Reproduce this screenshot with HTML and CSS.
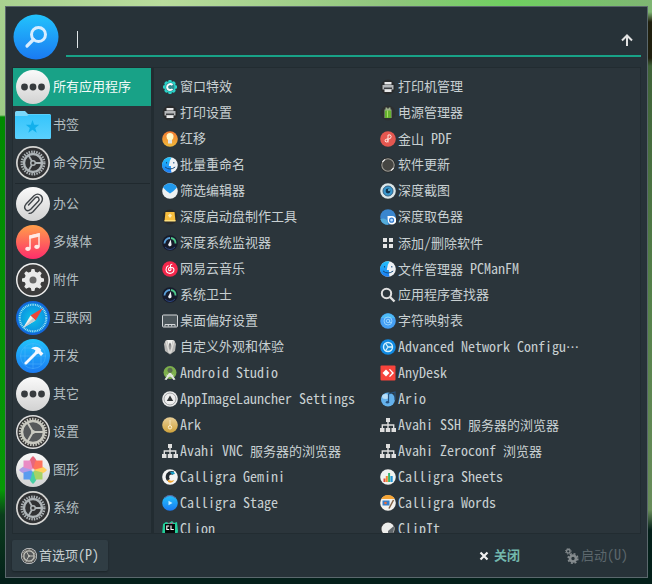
FILE: index.html
```html
<!DOCTYPE html>
<html lang="zh-CN">
<head>
<meta charset="utf-8">
<title>应用程序查找器</title>
<link rel="stylesheet" href="styles.css">
</head>
<body>
<svg class="defs" aria-hidden="true">
  <defs>
    <linearGradient id="g-blue" x2="0" y2="1"><stop stop-color="#22c3fc"/><stop offset="1" stop-color="#1a7af2"/></linearGradient>
    <linearGradient id="g-white" x2="0" y2="1"><stop stop-color="#fafafa"/><stop offset="1" stop-color="#d2d2d2"/></linearGradient>
    <linearGradient id="g-music" x2="0" y2="1"><stop stop-color="#ff9f4a"/><stop offset="1" stop-color="#fe2d6b"/></linearGradient>
    <linearGradient id="g-folder" x2="0" y2="1"><stop stop-color="#35c5fb"/><stop offset="1" stop-color="#5ad0fd"/></linearGradient>
    <linearGradient id="g-orange" x2="0" y2="1"><stop stop-color="#f57a2f"/><stop offset="1" stop-color="#efb93c"/></linearGradient>
    <linearGradient id="g-gold" x2="0" y2="1"><stop stop-color="#e9cf98"/><stop offset="1" stop-color="#d0a33c"/></linearGradient>
    <radialGradient id="g-compass"><stop stop-color="#0fc3e8"/><stop offset="1" stop-color="#0b8fe0"/></radialGradient>
  </defs>
  <symbol id="dots" viewBox="0 0 34 34"><circle cx="17" cy="17" r="17" fill="url(#g-white)"/><g fill="#373b3e"><circle cx="8.500" cy="17" r="3.400"/><circle cx="17" cy="17" r="3.400"/><circle cx="25.500" cy="17" r="3.400"/></g></symbol>
  <symbol id="folder" viewBox="0 0 36 30"><path d="M0 4V2.500Q0 1 1.500 1H10L13 4H34.500Q36 4 36 5.500V12H0z" fill="#7ad8fa"/><path d="M0 6H12L14 4.500H34.500Q36 4.500 36 6V27.500Q36 29 34.500 29H1.500Q0 29 0 27.500z" fill="url(#g-folder)"/><path d="M17.500 10l1.700 4.700 5 .1-4 3.100 1.500 4.800-4.200-2.900-4.200 2.900 1.500-4.800-4-3.100 5-.1z" fill="#12b0ec"/></symbol>
  <symbol id="gearwheel" viewBox="0 0 34 34"><circle cx="17" cy="17" r="17" fill="#d5d5d3"/><circle cx="17" cy="17" r="15.300" fill="#303133"/><circle cx="17" cy="17" r="11.300" fill="none" stroke="#aeb4b7" stroke-width="2.400" stroke-dasharray="1.500 1.050"/><circle cx="17" cy="17" r="9" fill="none" stroke="#aeb4b7" stroke-width="2.400"/><path d="M17 17H26M17 17L12.500 9.200M17 17L12.500 24.800" stroke="#aeb4b7" stroke-width="1.800"/><circle cx="17" cy="17" r="3" fill="#aeb4b7"/><circle cx="17" cy="17" r="1.500" fill="#333"/></symbol>
  <symbol id="settings" viewBox="0 0 34 34"><circle cx="17" cy="17" r="17" fill="#dedede"/><circle cx="17" cy="17" r="15.500" fill="#343434"/><circle cx="17" cy="17" r="13" fill="none" stroke="#c9c9c0" stroke-width="2.400" stroke-dasharray="1.500 1.223"/><circle cx="17" cy="17" r="11" fill="#55585a" stroke="#c9c9c0" stroke-width="2.500"/><path d="M17 17H28M17 17L11.500 7.500M17 17L11.500 26.500" stroke="#c9c9c0" stroke-width="2"/><circle cx="17" cy="17" r="2" fill="#c9c9c0"/></symbol>
  <symbol id="clip" viewBox="0 0 34 34"><circle cx="17" cy="17" r="17" fill="url(#g-white)"/><path d="M12.500 18.500L19 11.500q2-1.700 3.600-.2 1.200 1.700-.3 3.400L15 22.600q-2.800 2.800-5.300.6-2.300-2.500.3-5.600L18 9.200q3.700-3 6.900-.2 3 3.200.2 7.100L17 25.200q-1.800 1.700-3.900 1.700" transform="translate(0 -.500)" fill="none" stroke="#3e4348" stroke-width="1.400" stroke-linecap="round" stroke-linejoin="round"/></symbol>
  <symbol id="music" viewBox="0 0 34 34"><circle cx="17" cy="17" r="17" fill="url(#g-music)"/><path d="M14 23.500V11L23 9V21.500" fill="none" stroke="#ffe8e4" stroke-width="1.500"/><path d="M13.300 10.500L23.700 8V11.500L13.300 14z" fill="#ffe8e4"/><ellipse cx="12" cy="23.800" rx="2.700" ry="2.100" fill="#ffe8e4"/><ellipse cx="21" cy="21.800" rx="2.700" ry="2.100" fill="#ffe8e4"/></symbol>
  <symbol id="cog" viewBox="0 0 34 34"><circle cx="17" cy="17" r="17" fill="#f0f0f0"/><circle cx="17" cy="17" r="15.500" fill="#3c3c3c"/><g fill="#e9e9e9"><circle cx="17" cy="17" r="8.500"/><path id="tooth" d="M14.800 9L15.600 6h2.800L19.200 9V25L18.400 28H15.600L14.800 25z"/><use href="#tooth" transform="rotate(45 17 17)"/><use href="#tooth" transform="rotate(90 17 17)"/><use href="#tooth" transform="rotate(135 17 17)"/></g><circle cx="17" cy="17" r="3.500" fill="#686868"/></symbol>
  <symbol id="compass" viewBox="0 0 34 34"><circle cx="17" cy="17" r="17" fill="#1467d8"/><circle cx="17" cy="17" r="15" fill="url(#g-compass)"/><circle cx="17" cy="17" r="13.300" fill="none" stroke="#b9e8f5" stroke-width="2" stroke-dasharray=".800 .941"/><path d="M27 7L14.500 14.500L19.500 19.500z" fill="#ee4438"/><path d="M7 27L14.500 14.500L19.500 19.500z" fill="#f4f1ed"/><path d="M7 27L17 17L19.500 19.500z" fill="#c4ccd0"/></symbol>
  <symbol id="hammer" viewBox="0 0 34 34"><circle cx="17" cy="17" r="17" fill="url(#g-blue)"/><g stroke="#5bbcff" stroke-width=".600" fill="none" opacity=".7"><circle cx="17" cy="17" r="12.500"/><path d="M4 17H30M17 4V30M8 9H26M8 25H26M9 8V26M25 8V26"/></g><path d="M8.500 23.500L18.500 13.500L20.500 15.500L10.500 25.500Q8 25.500 8.500 23.500zM15 9.500Q19 6.500 23.500 9L25 10.500 24.700 12 27.500 14.500 25 17 22.500 14.500 20.500 15.500 18.500 13.500 19.500 11.500Q18 9.800 15 9.500z" fill="#f5f8ff"/></symbol>
  <symbol id="flower" viewBox="0 0 34 34"><circle cx="17" cy="17" r="17" fill="url(#g-white)"/><path d="M17 17L13.200 10Q13 6.500 17 3Q21 6.500 20.800 10z" fill="#e8667c"/><path d="M17 17L13.200 24Q13 27.500 17 31Q21 27.500 20.800 24z" fill="#48cfa4"/><path d="M17 17L10 13.200Q6.500 13 3 17Q6.500 21 10 20.800z" fill="#b09be8"/><path d="M17 17L24 13.200Q27.500 13 31 17Q27.500 21 24 20.800z" fill="#ffcf5e"/><path d="M17 17L7.500 14.500V7.500H14.500z" fill="#ea8bc4"/><path d="M17 17L19.500 7.500H26.500V14.500z" fill="#ff735c"/><path d="M17 17L26.500 19.500V26.500H19.500z" fill="#a6d366"/><path d="M17 17L14.500 26.500H7.500V19.500z" fill="#5b9cef"/><circle cx="17" cy="17" r="1.500" fill="#eadfe2"/></symbol>

  <symbol id="effects" viewBox="0 0 16 16"><g fill="#2bd4ca"><circle cx="8" cy="8" r="6"/><path d="M6.500 1h3v14h-3zM1 6.500v3h14v-3zM2.100 4.200l2.100-2.100 9.700 9.700-2.100 2.100zM11.800 2.100l2.100 2.100-9.700 9.700-2.100-2.100z"/></g><circle cx="8" cy="8" r="4.500" fill="#318b91"/><path d="M10.500 6Q9 4.500 7 5.300 5 6.200 5.100 8.200 5.400 11 8 11q1.700 0 2.500-1" fill="none" stroke="#fff" stroke-width="1.900"/></symbol>
  <symbol id="printer" viewBox="0 0 16 16"><circle cx="8" cy="8" r="7.500" fill="#292b2c"/><path d="M4.500 3h7v2.500h-7zM4.500 10h7v3h-7z" fill="#e8e8e8"/><path d="M2.500 6h11v4.500h-11z" fill="#b4b6b7"/><path d="M4 8.500h8v1.500H4z" fill="#3c3e40"/></symbol>
  <symbol id="bulb" viewBox="0 0 16 16"><circle cx="8" cy="8" r="7.800" fill="url(#g-orange)"/><path d="M4.500 5.500a3.500 3.500 0 0 1 7 0q0 2-1.500 3.500H6Q4.500 7.500 4.500 5.500" fill="#fff8c9"/><path d="M6 9h4v3.500H6z" fill="#e2e4e5"/></symbol>
  <symbol id="finder" viewBox="0 0 16 16"><circle cx="8" cy="8" r="7.800" fill="#eef1f4"/><path d="M9.500.4A7.800 7.800 0 1 0 9.500 15.600Q8.800 13 8.900 9H6.800Q7 4 9.500.4" fill="url(#g-blue)"/><path d="M4.500 5v1.500M11.800 5v1.500M3 10q5 4 10.200 0" fill="none" stroke="#164b7e"/></symbol>
  <symbol id="filter" viewBox="0 0 16 16"><circle cx="8" cy="8" r="7.800" fill="#eef1f2"/><path d="M1 4.500Q4 .3 8 .3t7 4.200Q12 8 8 10.500 4 8 1 4.500" fill="#2099ed"/></symbol>
  <symbol id="boot" viewBox="0 0 16 16"><circle cx="8" cy="8" r="7.500" fill="#2a2b2b"/><path d="M3.500 3h9l1 9h-11z" fill="#f7bd3d"/><path d="M2.500 11h11v1.500h-11z" fill="#ffe17d"/><path d="M8 4.500L10 6.500 8 9 6 6.500z" fill="#ffebad"/></symbol>
  <symbol id="gauge" viewBox="0 0 16 16"><circle cx="8" cy="8" r="7.800" fill="#161b2b"/><path d="M2.500 8.500A5.500 5.500 0 0 1 8 3" fill="none" stroke="#5aa0d8" stroke-width="1.800"/><path d="M9 3a5.500 5.500 0 0 1 4.500 5.500" fill="none" stroke="#50c98d" stroke-width="1.800"/><path d="M3 12q5 5 10 0" fill="none" stroke="#2d4786"/><path d="M8.700 4.500L9.500 9a1.700 1.700 0 1 1-2.600-.8z" fill="#eef2f7"/></symbol>
  <symbol id="netease" viewBox="0 0 16 16"><circle cx="8" cy="8" r="7.800" fill="#f5274b"/><path d="M10.300 3.200Q8 3.200 8.500 5.500L9 8.500q-.7 1.700-2.200.8Q5.800 7 8.300 6.300q3.500-.2 3.700 2.500-.3 3.500-4 3.600-3.800-.3-4-3.900.2-2.900 2.500-4" fill="none" stroke="#fff" stroke-width="1.100"/></symbol>
  <symbol id="desktop" viewBox="0 0 16 16"><rect x=".5" y="2" width="15" height="12" rx="1" fill="#4c565b" stroke="#d5d8da"/><path d="M3 13.500v-2h10v2M6.300 11.500v2M9.700 11.500v2" fill="none" stroke="#d5d8da"/></symbol>
  <symbol id="suit" viewBox="0 0 16 16"><path d="M4 1h8l2 4-1 7-5 3.500L3 12 2 5z" fill="#b8b7b5"/><path d="M5 1h6L8 11z" fill="#f0f0ed"/><path d="M8 3.500l1 1.500-.5 5L8 11l-.5-1L7 5z" fill="#777"/><path d="M4 2l3.500 12M12 2L8.500 14" stroke="#deddd9" stroke-width="1.400"/></symbol>
  <symbol id="android" viewBox="0 0 16 16"><circle cx="8" cy="7.500" r="6.500" fill="#7daf4c"/><circle cx="8" cy="5.200" r="2.500" fill="#5b6d50"/><path d="M7 8h2l4.500 6.500-2 .5L8 10.500 4.500 15l-2-.5z" fill="#e2e6e0"/><path d="M4.500 10q3.500 2.800 7 0" fill="none" stroke="#e2e6e0"/></symbol>
  <symbol id="appimage" viewBox="0 0 16 16"><circle cx="8" cy="8" r="7.800" fill="#eee"/><circle cx="8" cy="8" r="6" fill="none" stroke="#8b8e90" stroke-width=".800"/><path d="M8 4.500l3.200 5.500H4.800z" fill="#333739"/></symbol>
  <symbol id="ark" viewBox="0 0 16 16"><circle cx="8" cy="8" r="7.800" fill="url(#g-gold)"/><path d="M8 3.500v6" stroke="#fff4d7" stroke-width="1.400" stroke-dasharray="1 1"/><circle cx="8" cy="10.300" r="1.700" fill="none" stroke="#fff0cb" stroke-width="1"/></symbol>
  <symbol id="network" viewBox="0 0 16 16"><path d="M6 1h4v4H6zM0 11h4.500v4H0zM5.800 11h4.400v4H5.800zM11.500 11H16v4h-4.500z" fill="#dedede"/><path d="M8 5v6M2.300 11V8h11.400v3" fill="none" stroke="#dedede" stroke-width="1.400"/></symbol>
  <symbol id="gemini" viewBox="0 0 16 16"><circle cx="8" cy="8" r="7.800" fill="#f4f4f4"/><path d="M11.500 4Q8 3 6 5.500q-1.500 3 .5 5.500" fill="none" stroke="#222a31" stroke-width="3.400"/><path d="M8 3q4-1.500 5 2l-3 .5z" fill="#169dc8"/><path d="M5.500 10.500q3 2 7 .5-2.500 4-6.300 2z" fill="#eda12d"/></symbol>
  <symbol id="stage" viewBox="0 0 16 16"><circle cx="8" cy="8" r="7.800" fill="url(#g-blue)"/><path d="M2.500 3Q8-2 13.500 3" fill="none" stroke="#64609c"/><path d="M6.500 5.800L10.500 8l-4 2.200z" fill="#c4ecff"/></symbol>
  <symbol id="clion" viewBox="0 0 16 16"><path d="M1 3l3-2 3 1 3-2 2 2 3-1 1 9-1 5H0z" fill="#21ce99"/><path d="M5 1l3 2 3-2-2 4z" fill="#ff318c"/><path d="M3 3h10v12H3z" fill="#08090a"/><path d="M7.200 5H4.800v3.500h2.400M9 4.500v4h2.800M4.800 12.500h4" fill="none" stroke="#fff" stroke-width="1.100"/></symbol>
  <symbol id="battery" viewBox="0 0 16 16"><circle cx="8" cy="8" r="7.500" fill="#2d2f30"/><path d="M5.500 2.500h1.700v1h1.600v-1h1.700v2h1V13h-7V4.500h1z" fill="#9eb18b"/><path d="M5 5.500h6V13H5z" fill="#66b22f"/><path d="M7.500 5.500v7" stroke="#a9dc66"/></symbol>
  <symbol id="pdf" viewBox="0 0 16 16"><circle cx="8" cy="8" r="7.800" fill="#e45750"/><path d="M8 11.500V4q3-1 3.200 1.500Q11 8 8.500 8H7q-2.300.2-2 2 .7 1.800 2.400.7Q8 10 8 8" fill="none" stroke="#ffe6df" stroke-width="1"/></symbol>
  <symbol id="update" viewBox="0 0 16 16"><circle cx="8" cy="8" r="7.500" fill="#262727"/><circle cx="8" cy="8" r="6.200" fill="#454542" stroke="#9b9a94" stroke-width="1.100"/><path d="M2.500 5A6.200 6.200 0 0 1 5 2.500M13.500 11a6.200 6.200 0 0 1-2.500 2.500" fill="none" stroke="#eee" stroke-width="1.300"/></symbol>
  <symbol id="eye" viewBox="0 0 16 16"><circle cx="8" cy="8" r="7.800" fill="#dbe6e8"/><circle cx="8" cy="8" r="5" fill="#3897cc" stroke="#326084"/><circle cx="8" cy="8" r="2.400" fill="#133551"/><circle cx="9" cy="7" r="1" fill="#6cc7eb"/></symbol>
  <symbol id="picker" viewBox="0 0 16 16"><circle cx="8" cy="8" r="7.800" fill="#3a86cf"/><path d="M.4 10Q8 8 8 15.800A7.800 7.800 0 0 1 .4 10" fill="#54acdb"/><path d="M7.500 7H12a4.300 4.300 0 1 1-4.300 4.300z" fill="#fff"/><circle cx="11.600" cy="11.200" r="2" fill="#b7ddff" stroke="#347bcf" stroke-width="1.200"/></symbol>
  <symbol id="tiles" viewBox="0 0 16 16"><path d="M3 3h4v4H3zM9 3h4v4H9zM3 9h4v4H3zM9 9h4v4H9z" fill="#e4e4e4"/></symbol>
  <symbol id="find" viewBox="0 0 16 16"><circle cx="6.500" cy="6.500" r="4.700" fill="none" stroke="#e0e0e0" stroke-width="2"/><path d="M10 10l4.500 4.500" stroke="#e0e0e0" stroke-width="2.400"/></symbol>
  <symbol id="charmap" viewBox="0 0 16 16"><circle cx="8" cy="8" r="7.800" fill="#459ff3"/><path d="M1 5Q8-4 15 5z" fill="#4dbbf4"/><circle cx="8" cy="8" r="4" fill="none" stroke="#a3daff" stroke-width=".800"/><circle cx="8" cy="8" r="1.700" fill="none" stroke="#a3daff" stroke-width=".800"/><path d="M9.700 6.500v3h2" fill="none" stroke="#a3daff" stroke-width=".800"/></symbol>
  <symbol id="netconf" viewBox="0 0 16 16"><circle cx="8" cy="8" r="7.800" fill="#108ae2"/><circle cx="8" cy="8" r="4.500" fill="#1d8fd9" stroke="#d5f3ff" stroke-width="1.400"/><path d="M8 8h4M8 8L5.700 4.500M8 8l-2.300 3.500" stroke="#d5f3ff" stroke-width="1.300"/></symbol>
  <symbol id="anydesk" viewBox="0 0 16 16"><rect x=".5" y=".5" width="15" height="15" rx="1" fill="#f7443c"/><path d="M6 4.500L9.500 8 6 11.500 2.500 8z" fill="#fff"/><path d="M9 4.500L10 4l4 4-4 4-1-.700L12 8z" fill="#fff"/></symbol>
  <symbol id="ario" viewBox="0 0 16 16"><circle cx="8" cy="8.500" r="7" fill="#65b2ec"/><ellipse cx="5.500" cy="5.500" rx="3.500" ry="2.500" fill="#b7def8"/><path d="M8.500 11V3L15 1v8" fill="none" stroke="#27527e" stroke-width="1.200"/><ellipse cx="7.500" cy="11.300" rx="1.700" ry="1.300" fill="#27527e"/></symbol>
  <symbol id="sheets" viewBox="0 0 16 16"><circle cx="8" cy="8" r="7.800" fill="#f1f2f0"/><path d="M3.500 9.500h2V13h-2z" fill="#e04c3c"/><path d="M5.800 7h2v6h-2z" fill="#ef8b32"/><path d="M8.100 4h2v9h-2z" fill="#39b568"/><path d="M10.400 7h2.300v6h-2.300z" fill="#2496d7"/></symbol>
  <symbol id="words" viewBox="0 0 16 16"><circle cx="8" cy="8" r="7.800" fill="#f4f2ed"/><path d="M1.200 4A7.800 7.800 0 0 1 14.800 4z" fill="#f5a536"/><path d="M2.500 5.500h7v5h-7z" fill="#347fca"/><circle cx="5.500" cy="8" r="1.300" fill="#ef6c38"/><path d="M13.500 5l-4.500 8.500" stroke="#806044" stroke-width="1.500"/></symbol>
  <symbol id="clipit" viewBox="0 0 16 16"><circle cx="8" cy="8" r="7.800" fill="#303437"/><circle cx="8" cy="8" r="6.500" fill="#ededeb"/><path d="M13.800 5L8 10v5.500q7-2 5.800-10.500" fill="#60666a"/></symbol>
</svg>

<main class="finder">
  <header class="search">
    <svg class="logo" viewBox="0 0 46 46" aria-hidden="true"><circle cx="23" cy="23" r="22.500" fill="url(#g-blue)"/><circle cx="25.500" cy="20.500" r="7" fill="none" stroke="#d7edff" stroke-width="3"/><path d="M20.500 25.500L14 32" stroke="#d7edff" stroke-width="3.200" stroke-linecap="round"/></svg>
    <div class="entry">
      <span class="caret"></span>
      <input class="entry-input" type="text" aria-label="搜索">
      <button class="collapse" type="button" aria-label="收起"><svg viewBox="0 0 12 12"><path d="M6 12V1.500M1 6.500L6 1.500L11 6.500" fill="none" stroke="#e2e2e2" stroke-width="2"/></svg></button>
    </div>
  </header>

  <div class="panes">
    <nav class="categories">
      <button class="category selected" type="button"><svg><use href="#dots"/></svg><span class="label">所有应用程序</span></button>
      <button class="category" type="button"><svg class="wide"><use href="#folder"/></svg><span class="label">书签</span></button>
      <button class="category" type="button"><svg><use href="#gearwheel"/></svg><span class="label">命令历史</span></button>
      <hr class="divider">
      <button class="category" type="button"><svg><use href="#clip"/></svg><span class="label">办公</span></button>
      <button class="category" type="button"><svg><use href="#music"/></svg><span class="label">多媒体</span></button>
      <button class="category" type="button"><svg><use href="#cog"/></svg><span class="label">附件</span></button>
      <button class="category" type="button"><svg><use href="#compass"/></svg><span class="label">互联网</span></button>
      <button class="category" type="button"><svg><use href="#hammer"/></svg><span class="label">开发</span></button>
      <button class="category" type="button"><svg><use href="#dots"/></svg><span class="label">其它</span></button>
      <button class="category" type="button"><svg><use href="#settings"/></svg><span class="label">设置</span></button>
      <button class="category" type="button"><svg><use href="#flower"/></svg><span class="label">图形</span></button>
      <button class="category" type="button"><svg><use href="#gearwheel"/></svg><span class="label">系统</span></button>
    </nav>

    <section class="apps">
      <button class="app" type="button"><svg><use href="#effects"/></svg><span class="label">窗口特效</span></button>
      <button class="app" type="button"><svg><use href="#printer"/></svg><span class="label">打印机管理</span></button>
      <button class="app" type="button"><svg><use href="#printer"/></svg><span class="label">打印设置</span></button>
      <button class="app" type="button"><svg><use href="#battery"/></svg><span class="label">电源管理器</span></button>
      <button class="app" type="button"><svg><use href="#bulb"/></svg><span class="label">红移</span></button>
      <button class="app" type="button"><svg><use href="#pdf"/></svg><span class="label">金山<span class="latin"> PDF</span></span></button>
      <button class="app" type="button"><svg><use href="#finder"/></svg><span class="label">批量重命名</span></button>
      <button class="app" type="button"><svg><use href="#update"/></svg><span class="label">软件更新</span></button>
      <button class="app" type="button"><svg><use href="#filter"/></svg><span class="label">筛选编辑器</span></button>
      <button class="app" type="button"><svg><use href="#eye"/></svg><span class="label">深度截图</span></button>
      <button class="app" type="button"><svg><use href="#boot"/></svg><span class="label">深度启动盘制作工具</span></button>
      <button class="app" type="button"><svg><use href="#picker"/></svg><span class="label">深度取色器</span></button>
      <button class="app" type="button"><svg><use href="#gauge"/></svg><span class="label">深度系统监视器</span></button>
      <button class="app" type="button"><svg><use href="#tiles"/></svg><span class="label">添加<span class="latin">/</span>删除软件</span></button>
      <button class="app" type="button"><svg><use href="#netease"/></svg><span class="label">网易云音乐</span></button>
      <button class="app" type="button"><svg><use href="#finder"/></svg><span class="label">文件管理器<span class="latin"> PCManFM</span></span></button>
      <button class="app" type="button"><svg><use href="#gauge"/></svg><span class="label">系统卫士</span></button>
      <button class="app" type="button"><svg><use href="#find"/></svg><span class="label">应用程序查找器</span></button>
      <button class="app" type="button"><svg><use href="#desktop"/></svg><span class="label">桌面偏好设置</span></button>
      <button class="app" type="button"><svg><use href="#charmap"/></svg><span class="label">字符映射表</span></button>
      <button class="app" type="button"><svg><use href="#suit"/></svg><span class="label">自定义外观和体验</span></button>
      <button class="app" type="button"><svg><use href="#netconf"/></svg><span class="label"><span class="latin">Advanced Network Configu</span>⋯</span></button>
      <button class="app" type="button"><svg><use href="#android"/></svg><span class="label latin">Android Studio</span></button>
      <button class="app" type="button"><svg><use href="#anydesk"/></svg><span class="label latin">AnyDesk</span></button>
      <button class="app" type="button"><svg><use href="#appimage"/></svg><span class="label latin">AppImageLauncher Settings</span></button>
      <button class="app" type="button"><svg><use href="#ario"/></svg><span class="label latin">Ario</span></button>
      <button class="app" type="button"><svg><use href="#ark"/></svg><span class="label latin">Ark</span></button>
      <button class="app" type="button"><svg><use href="#network"/></svg><span class="label"><span class="latin">Avahi SSH </span>服务器的浏览器</span></button>
      <button class="app" type="button"><svg><use href="#network"/></svg><span class="label"><span class="latin">Avahi VNC </span>服务器的浏览器</span></button>
      <button class="app" type="button"><svg><use href="#network"/></svg><span class="label"><span class="latin">Avahi Zeroconf </span>浏览器</span></button>
      <button class="app" type="button"><svg><use href="#gemini"/></svg><span class="label latin">Calligra Gemini</span></button>
      <button class="app" type="button"><svg><use href="#sheets"/></svg><span class="label latin">Calligra Sheets</span></button>
      <button class="app" type="button"><svg><use href="#stage"/></svg><span class="label latin">Calligra Stage</span></button>
      <button class="app" type="button"><svg><use href="#words"/></svg><span class="label latin">Calligra Words</span></button>
      <button class="app" type="button"><svg><use href="#clion"/></svg><span class="label latin">CLion</span></button>
      <button class="app" type="button"><svg><use href="#clipit"/></svg><span class="label latin">ClipIt</span></button>
    </section>
  </div>

  <footer class="actions">
    <button class="action preferences" type="button"><svg><use href="#settings"/></svg><span class="label">首选项<span class="latin">(P)</span></span></button>
    <button class="action close" type="button"><svg viewBox="0 0 10 10"><path d="M1.500 1.500l7 7M8.500 1.500l-7 7" stroke="#f0f0f0" stroke-width="2.200"/></svg><span class="label">关闭</span></button>
    <button class="action launch" type="button" disabled><svg viewBox="0 0 14 16"><g fill="none" stroke="#858b8e"><circle cx="8" cy="10.500" r="3" stroke-width="2.600"/><circle cx="8" cy="10.500" r="4.800" stroke-width="1.600" stroke-dasharray="2 1.770"/><circle cx="3.300" cy="3.300" r="1.800" stroke-width="1.300"/><circle cx="3.300" cy="3.300" r="2.800" stroke-width="1" stroke-dasharray="1.200 1"/></g></svg><span class="label">启动<span class="latin">(U)</span></span></button>
  </footer>
</main>
</body>
</html>
```
FILE: styles.css
```css
* {
  box-sizing: border-box;
}

body {
  margin: 0;
  height: 100vh;
  padding: 6px 4px 6px 5px;
  display: flex;
  background:
    linear-gradient(90deg, #a9d190, #b9dc9c 25%, #8fc57c 60%, #6fd060 78%, #7fb573) top / 100% 6px no-repeat,
    linear-gradient(#04201a, #04201a) bottom / 100% 6px no-repeat,
    linear-gradient(#a9d190, #9ccb86 115px, #008a00 117px, #069906 490px, #0a3d1c 515px, #04201a) left / 6px 100% no-repeat,
    linear-gradient(#7fb573 12px, #20200f 22px, #20200f 58px, #3f6238 66px, #55814a 300px, #688c5a 510px, #04201a 530px) right / 6px 100% no-repeat,
    #273238;
  font: 13px/20px "Noto Sans CJK SC", sans-serif;
  color: #c8d0d2;
}

button,
input {
  margin: 0;
  padding: 0;
  border: 0;
  background: none;
  color: inherit;
  font: inherit;
}

button {
  display: flex;
  align-items: center;
  text-align: left;
  white-space: nowrap;
}

svg {
  display: block;
  flex: none;
}

.defs {
  position: absolute;
  width: 0;
  height: 0;
}

.label {
  padding-bottom: 2px;
}

.latin {
  font-family: "Noto Sans Mono CJK SC", "Liberation Mono", monospace;
  font-size: 14px;
  white-space: pre;
}

.finder {
  flex: 1;
  min-width: 0;
  display: flex;
  flex-direction: column;
  padding: 7px 6px 6px;
  border: 1px solid #5b686d;
  background: #273238;
}

.search {
  display: flex;
  gap: 7px;
  padding-left: 1px;
}

.logo {
  width: 46px;
  height: 46px;
}

.entry {
  flex: 1;
  display: flex;
  align-items: center;
  height: 43px;
  margin-bottom: 10px;
  padding: 10px 8px 0 11px;
  border-bottom: 2px solid #18a287;
}

.caret {
  width: 1px;
  height: 17px;
  background: #dfe5e7;
}

.entry-input {
  flex: 1;
  min-width: 0;
  outline: 0;
}

.collapse svg {
  width: 12px;
  height: 12px;
}

.panes {
  flex: 1;
  min-height: 0;
  display: flex;
}

.categories,
.apps {
  border: 1px solid #222c31;
  background: #2b353b;
  overflow: hidden;
}

.categories {
  width: 141px;
  border-right-width: 2px;
}

.category {
  width: 100%;
  height: 38px;
  gap: 3px;
  padding-left: 3px;
  color: #b4bec1;
}

.category svg {
  width: 34px;
  height: 34px;
}

.category .wide {
  width: 36px;
  height: 30px;
  margin: 0 -1px;
}

.category.selected {
  background: #18a287;
  color: #f2faf8;
}

.divider {
  height: 1px;
  margin: 1px 1px 1px 2px;
  border: 0;
  background: #20292e;
}

.apps {
  flex: 1;
  display: grid;
  grid-template-columns: 218px 1fr;
  grid-auto-rows: 26px;
  padding: 6px 0 0 8px;
}

.app {
  gap: 2px;
}

.app svg {
  width: 16px;
  height: 16px;
}

.actions {
  display: flex;
  align-items: center;
  padding-top: 6px;
}

.action {
  height: 31px;
}

.action svg {
  width: 16px;
  height: 16px;
}

.preferences {
  gap: 2px;
  margin-right: auto;
  padding: 0 9px;
  border-radius: 2px;
  background: #303d44;
  box-shadow: 0 1px 2px #1c2529;
}

.close {
  gap: 5px;
  margin-right: 45px;
  color: #73b8ad;
  font-weight: bold;
}

.action.close svg {
  width: 10px;
  height: 10px;
}

.launch {
  gap: 2px;
  padding-right: 13px;
  color: #5c676c;
}

.action.launch svg {
  width: 14px;
}
```
